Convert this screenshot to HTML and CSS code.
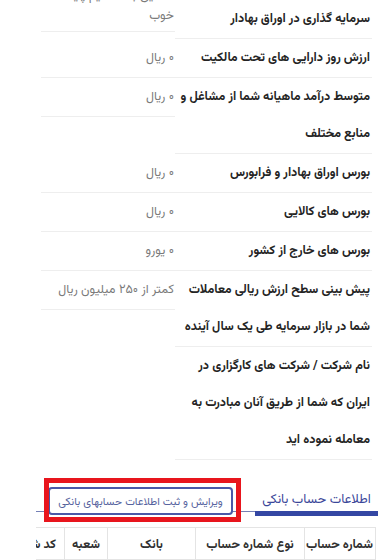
FILE: index.html
```html
<!DOCTYPE html>
<html lang="fa" dir="rtl">
<head>
<meta charset="utf-8">
<title>اطلاعات</title>
<link rel="stylesheet" href="styles.css">
</head>
<body>
<main class="page">
  <section class="info">
    <div class="info__row">
      <div class="info__label">میزان آشنایی شما با مفاهیم<br>سرمایه گذاری در اوراق بهادار</div>
      <div class="info__value info__value--stack">آشنایی با مفاهیم پایه<br>خوب</div>
    </div>
    <div class="info__row">
      <div class="info__label">ارزش روز دارایی های تحت مالکیت</div>
      <div class="info__value">۰ ریال</div>
    </div>
    <div class="info__row">
      <div class="info__label">متوسط درآمد ماهیانه شما از مشاغل و<br>منابع مختلف</div>
      <div class="info__value">۰ ریال</div>
    </div>
    <div class="info__row">
      <div class="info__label">بورس اوراق بهادار و فرابورس</div>
      <div class="info__value">۰ ریال</div>
    </div>
    <div class="info__row">
      <div class="info__label">بورس های کالایی</div>
      <div class="info__value">۰ ریال</div>
    </div>
    <div class="info__row">
      <div class="info__label">بورس های خارج از کشور</div>
      <div class="info__value">۰ یورو</div>
    </div>
    <div class="info__row">
      <div class="info__label">پیش بینی سطح ارزش ریالی معاملات<br>شما در بازار سرمایه طی یک سال آینده</div>
      <div class="info__value">کمتر از ۲۵۰ میلیون ریال</div>
    </div>
    <div class="info__row">
      <div class="info__label">نام شرکت / شرکت های کارگزاری در<br>ایران که شما از طریق آنان مبادرت به<br>معامله نموده اید</div>
      <div class="info__value"></div>
    </div>
  </section>

  <section class="bank">
    <div class="tabs">
      <div class="tab tab--active">اطلاعات حساب بانکی</div>
      <button class="tabs__action" type="button">ویرایش و ثبت اطلاعات حسابهای بانکی</button>
      <span class="highlight"></span>
    </div>
    <div class="table-wrap">
      <table class="accounts">
        <colgroup>
          <col class="col-number">
          <col class="col-type">
          <col class="col-bank">
          <col class="col-branch">
          <col class="col-code">
          <col class="col-city">
        </colgroup>
        <thead>
          <tr>
            <th>شماره حساب</th>
            <th>نوع شماره حساب</th>
            <th>بانک</th>
            <th>شعبه</th>
            <th class="th-code">کد شعبه</th>
            <th>شهر</th>
          </tr>
        </thead>
        <tbody>
          <tr>
            <td>&nbsp;</td><td>&nbsp;</td><td>&nbsp;</td><td>&nbsp;</td><td>&nbsp;</td><td>&nbsp;</td>
          </tr>
        </tbody>
      </table>
    </div>
  </section>
</main>
</body>
</html>
```

FILE: styles.css
```css
html, body {
  margin: 0;
  padding: 0;
  background: #ffffff;
}

body {
  font-family: "Vazirmatn", "Noto Sans Arabic", "DejaVu Sans", sans-serif;
  color: #222;
  overflow: hidden;
}

.page {
  padding: 0 13px 0 36px;
  margin-top: -37px;
}

/* ---------- info list ---------- */
.info {
  margin: 0 6px 0 5px;
}

.info__row {
  display: flex;
  align-items: flex-start;
}

.info__label {
  width: 197px;
  flex: none;
  box-sizing: border-box;
  padding: 1px 2px 0 0;
  line-height: 37px;
  font-size: 12.5px;
  font-weight: bold;
  color: #242424;
  white-space: nowrap;
  border-bottom: 1px solid #eeeeee;
}

.info__value {
  flex: 1;
  padding: 1px 1px 0 0;
  line-height: 37px;
  font-size: 12.5px;
  color: #7a7a7a;
  white-space: nowrap;
  border-bottom: 1px solid #eeeeee;
}

.info__value--stack {
  line-height: 20px;
  padding: 23px 1px 5px 0;
}

.info__value:empty {
  border-bottom: none;
}

/* ---------- tabs ---------- */
.tabs {
  position: relative;
  display: flex;
  align-items: flex-end;
  margin-top: 27px;
  border-bottom: 1px solid #7480b6;
}

.tab {
  width: 123px;
  padding: 3px 0 1px;
  line-height: 20px;
  font-size: 13px;
  text-align: center;
  color: #3a4699;
  white-space: nowrap;
}

.tab--active {
  border-bottom: 5px solid #3447a3;
  margin-bottom: -5px;
}

.tabs__action {
  margin: 0 auto -4px 12px;
  width: 185px;
  height: 28px;
  padding: 2px 0 0;
  box-sizing: border-box;
  border: 2px solid #4a58a8;
  border-radius: 4px;
  background: #ffffff;
  font-family: "Vazirmatn", "Noto Sans Arabic", sans-serif;
  font-size: 11px;
  color: #56639e;
  white-space: nowrap;
}

.highlight {
  position: absolute;
  left: 8px;
  top: -9px;
  width: 197px;
  height: 44px;
  box-sizing: border-box;
  border: 5px solid #e8151d;
  pointer-events: none;
}

/* ---------- table ---------- */
.table-wrap {
  margin: 15px 2px 0 0;
  overflow: hidden;
}

.accounts {
  border-collapse: collapse;
  table-layout: fixed;
  width: 451px;
}

.accounts th,
.accounts td {
  border: 1px solid #e4e4e4;
  height: 32px;
  padding: 3px 2px 0;
  box-sizing: border-box;
  white-space: nowrap;
  text-align: center;
  overflow: hidden;
}

.accounts th {
  font-size: 12.5px;
  font-weight: bold;
  color: #303030;
  background: #ffffff;
}

.accounts th.th-code {
  text-align: right;
  padding-right: 8px;
}

.accounts td {
  background: #f4f4f4;
}

.col-number { width: 71px; }
.col-type { width: 109px; }
.col-bank { width: 88px; }
.col-branch { width: 43px; }
.col-code { width: 60px; }
.col-city { width: 80px; }
```
